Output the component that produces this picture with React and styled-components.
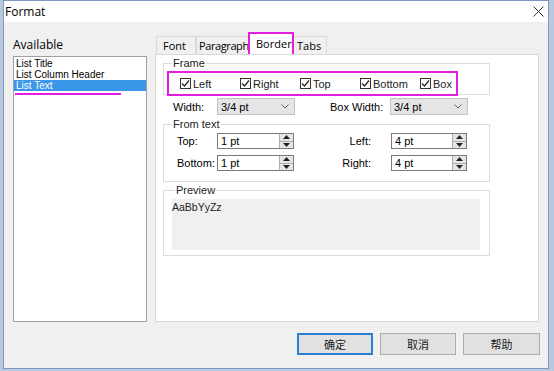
import React from "react"
import styled, { createGlobalStyle } from "styled-components"

const GlobalStyle = createGlobalStyle`
* {
    box-sizing: border-box;
}
body {
    margin: 0;
    width: 554px;
    height: 371px;
    background: #b9c8dc;
    font-family: "Liberation Sans", Arial, sans-serif;
    color: #000;
    overflow: hidden;
}
`

const UI = `"Open Sans", "Noto Sans", sans-serif`
const CJK = `"Noto Sans CJK SC", sans-serif`
const MAGENTA = "#e21fe0"

const Win = styled.div`
margin-left: 3px;
width: 546px;
height: 369px;
border: 1px solid #7b98c4;
background: #f0f0f0;
display: flex;
flex-direction: column;
`

const TitleBar = styled.div`
height: 21px;
background: #fff;
display: flex;
align-items: center;
justify-content: space-between;
padding: 0 4px 0 1px;
font-family: ${UI};
font-size: 12px;
`

const Main = styled.div`
display: flex;
padding: 10px 9px 0 9px;
gap: 8px;
height: 300px;
`

const LeftPane = styled.div`
width: 134px;
padding-top: 6px;
display: flex;
flex-direction: column;
gap: 4px;
`

const PaneLabel = styled.div`
font-family: ${UI};
font-size: 12px;
line-height: 14px;
`

const ListBox = styled.div`
height: 266px;
background: #fff;
border: 1px solid #a0a0a0;
padding-top: 1px;
font-size: 10px;
`

const ListItem = styled.div`
height: 11px;
line-height: 11px;
padding-left: 2px;
background: ${p => p.$selected ? "#3a97ea" : "transparent"};
color: ${p => p.$selected ? "#fff" : "#000"};
white-space: nowrap;
`

const Underline = styled.div`
margin: 2px 0 0 1px;
width: 106px;
height: 2px;
background: ${MAGENTA};
`

const RightPane = styled.div`
width: 384px;
display: flex;
flex-direction: column;
`

const TabStrip = styled.div`
height: 22px;
display: flex;
align-items: flex-end;
padding-left: 1px;
`

const Tab = styled.div`
height: ${p => p.$active ? "22px" : "18px"};
width: ${p => p.$w}px;
padding-left: ${p => p.$pl || 6}px;
font-family: ${UI};
font-size: 11px;
letter-spacing: ${p => p.$tight ? "-0.4px" : "0"};
line-height: ${p => p.$active ? "20px" : "17px"};
background: ${p => p.$active ? "#fff" : "#f0f0f0"};
border: ${p => p.$active ? `2px solid ${MAGENTA}` : "1px solid #d9d9d9"};
border-bottom: none;
margin-left: ${p => p.$active ? "-2px" : "0"};
margin-right: ${p => p.$active ? "-2px" : "0"};
position: relative;
z-index: ${p => p.$active ? 2 : 1};
white-space: nowrap;
`

const Panel = styled.div`
height: 268px;
background: #fff;
border: 1px solid #d9d9d9;
padding: 2px 0 0 7px;
`

const Group = styled.fieldset`
margin: ${p => p.$mt || 0}px 0 0 0;
width: 327px;
height: ${p => p.$h}px;
border: 1px solid #dcdcdc;
padding: ${p => p.$pad};
legend {
    font-size: 11px;
    line-height: 12px;
    padding: 0 1px;
    margin-left: 5px;
    color: #222;
}
`

const CheckRow = styled.div`
height: 25px;
width: 291px;
border: 2px solid ${MAGENTA};
display: grid;
grid-template-columns: repeat(5, 60px);
align-items: center;
padding-left: 11px;
margin-top: 2px;
`

const Check = styled.label`
display: flex;
align-items: center;
gap: 2px;
font-size: 11px;
color: #222;
`

const Box = styled.span`
width: 11px;
height: 11px;
border: 1px solid #333;
background: #fff;
display: flex;
align-items: center;
justify-content: center;
`

const WidthRow = styled.div`
margin-top: 3px;
height: 17px;
display: grid;
grid-template-columns: 44px 78px 35px 60px 78px;
align-items: center;
padding-left: 10px;
font-size: 11px;
`

const Select = styled.div`
height: 17px;
background: #e5e5e5;
border: 1px solid #c2c2c2;
display: flex;
align-items: center;
justify-content: space-between;
padding: 0 5px 0 3px;
font-size: 11px;
`

const SpinGrid = styled.div`
display: grid;
grid-template-columns: 40px 77px 97px 76px;
row-gap: 6px;
align-items: center;
padding-left: 10px;
margin-top: 3px;
font-size: 11px;
`

const RightLabel = styled.span`
text-align: right;
padding-right: 20px;
`

const Spin = styled.div`
height: 16px;
display: flex;
border: 1px solid #7a7a7a;
background: #fff;
`

const SpinInput = styled.div`
flex: 1;
padding-left: 3px;
line-height: 14px;
font-size: 11px;
`

const SpinButtons = styled.div`
width: 14px;
display: flex;
flex-direction: column;
background: #e6e6e6;
border-left: 1px solid #adadad;
`

const SpinHalf = styled.div`
flex: 1;
display: flex;
align-items: center;
justify-content: center;
border-top: ${p => p.$down ? "1px solid #adadad" : "none"};
`

const PreviewArea = styled.div`
margin: 3px 0 0 2px;
width: 308px;
height: 51px;
background: #f0f0f0;
font-size: 10.5px;
padding-top: 2px;
color: #222;
`

const Footer = styled.div`
display: flex;
justify-content: flex-end;
gap: 7px;
padding: 11px 8px 0 0;
`

const Button = styled.button`
width: ${p => p.$w || 76}px;
height: 22px;
background: #e1e1e1;
border: ${p => p.$def ? "2px solid #2a7fd4" : "1px solid #adadad"};
font-family: ${CJK};
font-size: 11px;
color: #222;
padding: 0;
`

const Tick = () => (
    <svg width="9" height="9" viewBox="0 0 9 9">
        <path d="M1 4.5 L3.5 7 L8 1.5" fill="none" stroke="#222" strokeWidth="1.2" />
    </svg>
)

const Chevron = () => (
    <svg width="8" height="5" viewBox="0 0 8 5">
        <path d="M0.5 0.5 L4 4 L7.5 0.5" fill="none" stroke="#666" strokeWidth="1" />
    </svg>
)

const Arrow = ({ up }) => (
    <svg width="7" height="4" viewBox="0 0 7 4">
        <path d={up ? "M0 4 L3.5 0 L7 4 Z" : "M0 0 L3.5 4 L7 0 Z"} fill="#222" />
    </svg>
)

const SpinBox = ({ value }) => (
    <Spin>
        <SpinInput>{value}</SpinInput>
        <SpinButtons>
            <SpinHalf><Arrow up /></SpinHalf>
            <SpinHalf $down><Arrow /></SpinHalf>
        </SpinButtons>
    </Spin>
)

const frames = ["Left", "Right", "Top", "Bottom", "Box"]

export default function App() {
    return (
        <Win>
            <GlobalStyle />
            <TitleBar>
                <span>Format</span>
                <svg width="11" height="11" viewBox="0 0 11 11">
                    <path d="M0.5 0.5 L10.5 10.5 M10.5 0.5 L0.5 10.5" stroke="#333" strokeWidth="1" />
                </svg>
            </TitleBar>
            <Main>
                <LeftPane>
                    <PaneLabel>Available</PaneLabel>
                    <ListBox>
                        <ListItem>List Title</ListItem>
                        <ListItem>List Column Header</ListItem>
                        <ListItem $selected>List Text</ListItem>
                        <Underline />
                    </ListBox>
                </LeftPane>
                <RightPane>
                    <TabStrip>
                        <Tab $w={40}>Font</Tab>
                        <Tab $w={54} $pl={2} $tight>Paragraph</Tab>
                        <Tab $w={46} $pl={6} $active>Border</Tab>
                        <Tab $w={35} $pl={4}>Tabs</Tab>
                    </TabStrip>
                    <Panel>
                        <Group $h={38} $pad="0 3px 3px 3px">
                            <legend>Frame</legend>
                            <CheckRow>
                                {frames.map(f => (
                                    <Check key={f}>
                                        <Box><Tick /></Box>
                                        {f}
                                    </Check>
                                ))}
                            </CheckRow>
                        </Group>
                        <WidthRow>
                            <span>Width:</span>
                            <Select>3/4 pt<Chevron /></Select>
                            <span />
                            <span>Box Width:</span>
                            <Select>3/4 pt<Chevron /></Select>
                        </WidthRow>
                        <Group $mt={3} $h={64} $pad="0 3px 3px 3px">
                            <legend>From text</legend>
                            <SpinGrid>
                                <span>Top:</span>
                                <SpinBox value="1 pt" />
                                <RightLabel>Left:</RightLabel>
                                <SpinBox value="4 pt" />
                                <span>Bottom:</span>
                                <SpinBox value="1 pt" />
                                <RightLabel>Right:</RightLabel>
                                <SpinBox value="4 pt" />
                            </SpinGrid>
                        </Group>
                        <Group $mt={2} $h={72} $pad="0 3px 3px 6px">
                            <legend>Preview</legend>
                            <PreviewArea>AaBbYyZz</PreviewArea>
                        </Group>
                    </Panel>
                </RightPane>
            </Main>
            <Footer>
                <Button $def>确定</Button>
                <Button>取消</Button>
                <Button $w={77}>帮助</Button>
            </Footer>
        </Win>
    )
}
